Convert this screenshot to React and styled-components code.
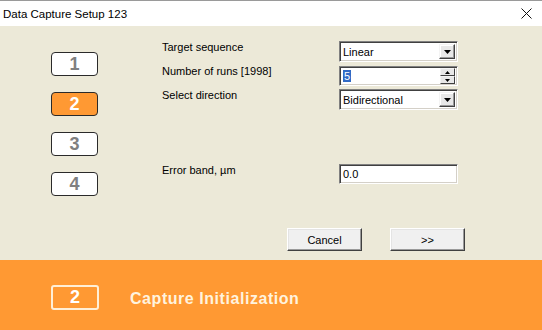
import React from "react";
import styled, { createGlobalStyle } from "styled-components";

const Global = createGlobalStyle`
  html, body { margin: 0; padding: 0; background: #ECE9D8; }
  * { box-sizing: border-box; }
`;

const Window = styled.div`
  width: 542px;
  height: 330px;
  display: flex;
  flex-direction: column;
  font-family: "Liberation Sans", Arial, sans-serif;
  background: #ECE9D8;
  overflow: hidden;
`;

const TitleBar = styled.div`
  height: 26px;
  flex: none;
  background: #fff;
  border-top: 1px solid #9a9a9a;
  display: flex;
  align-items: center;
  justify-content: space-between;
  padding: 0 10px 0 3px;
  font-size: 11.5px;
  color: #000;
`;

const Body = styled.div`
  height: 234px;
  flex: none;
  display: flex;
  flex-direction: column;
`;

const Content = styled.div`
  display: flex;
`;

const StepList = styled.div`
  width: 162px;
  padding: 26px 0 0 51px;
  display: flex;
  flex-direction: column;
  gap: 16px;
`;

const StepBox = styled.div`
  width: 47px;
  height: 24px;
  border: 1px solid #2a2a2a;
  border-radius: 4px;
  background: ${(p) => (p.$active ? "#FF9933" : "#ffffff")};
  color: ${(p) => (p.$active ? "#ffffff" : "#808080")};
  font-weight: bold;
  font-size: 18px;
  line-height: 22px;
  text-align: center;
`;

const Form = styled.div`
  display: flex;
  flex-direction: column;
  padding-top: 15px;
`;

const Row = styled.div`
  display: flex;
  align-items: flex-start;
  margin-top: ${(p) => p.$gap || 0}px;
`;

const Label = styled.div`
  width: 177px;
  font-size: 11px;
  line-height: 13px;
  color: #000;
  margin-top: ${(p) => p.$offset || 0}px;
`;

const Field = styled.div`
  width: 119px;
  height: ${(p) => p.$h || 21}px;
  background: #fff;
  border-top: 1px solid #808080;
  border-left: 1px solid #808080;
  border-right: 1px solid #ffffff;
  border-bottom: 1px solid #ffffff;
  box-shadow: inset 1px 1px 0 #404040, inset -1px -1px 0 #D4D0C8;
  display: flex;
  align-items: center;
  padding: 2px 2px 2px 3px;
  font-size: 11px;
  color: #000;
`;

const FieldText = styled.div`
  flex: 1;
  white-space: nowrap;
`;

const Selected = styled.span`
  background: #316AC5;
  color: #fff;
  padding: 0 1px;
`;

const ArrowButton = styled.div`
  width: 16px;
  height: 15px;
  background: #E8E8E8;
  border-top: 1px solid #f4f4f4;
  border-left: 1px solid #f4f4f4;
  border-right: 1px solid #404040;
  border-bottom: 1px solid #404040;
  box-shadow: inset -1px -1px 0 #9a9a9a, inset 1px 1px 0 #ffffff;
  display: flex;
  align-items: center;
  justify-content: center;
`;

const SpinStack = styled.div`
  display: flex;
  flex-direction: column;
  width: 15px;
  height: 16px;
`;

const SpinButton = styled.div`
  flex: 1;
  background: #E8E8E8;
  border-top: 1px solid #f4f4f4;
  border-left: 1px solid #f4f4f4;
  border-right: 1px solid #404040;
  border-bottom: 1px solid #404040;
  display: flex;
  align-items: center;
  justify-content: center;
`;

const ButtonRow = styled.div`
  margin-top: auto;
  margin-bottom: 9px;
  padding-left: 287px;
  display: flex;
  gap: 28px;
`;

const Button = styled.div`
  width: 75px;
  height: 23px;
  background: #F0F0F0;
  border-top: 1px solid #ffffff;
  border-left: 1px solid #ffffff;
  border-right: 1px solid #404040;
  border-bottom: 1px solid #404040;
  box-shadow: inset -1px -1px 0 #9a9a9a, inset 1px 1px 0 #e4e4e4;
  display: flex;
  align-items: center;
  justify-content: center;
  font-size: 11px;
  color: #000;
`;

const Footer = styled.div`
  flex: 1;
  background: #FF9933;
  display: flex;
  align-items: center;
  padding: 4px 0 0 51px;
  gap: 31px;
`;

const FooterBox = styled.div`
  width: 48px;
  height: 25px;
  border: 2px solid #FFEFD6;
  border-radius: 3px;
  color: #fff;
  font-weight: bold;
  font-size: 18px;
  line-height: 21px;
  text-align: center;
`;

const FooterTitle = styled.div`
  color: #FFF3DE;
  font-weight: bold;
  font-size: 16px;
  letter-spacing: 0.55px;
  padding-top: 3px;
`;

const Tri = ({ up, small }) => {
  const w = small ? 5 : 7;
  const h = small ? 3 : 4;
  return (
    <svg width={w} height={h} viewBox={`0 0 ${w} ${h}`}>
      <polygon
        points={up ? `0,${h} ${w},${h} ${w / 2},0` : `0,0 ${w},0 ${w / 2},${h}`}
        fill="#000"
      />
    </svg>
  );
};

const Combo = ({ value }) => (
  <Field>
    <FieldText>{value}</FieldText>
    <ArrowButton>
      <Tri />
    </ArrowButton>
  </Field>
);

export default function App() {
  return (
    <Window>
      <Global />
      <TitleBar>
        <span>Data Capture Setup 123</span>
        <svg width="11" height="11" viewBox="0 0 11 11">
          <path d="M0.5 0.5 L10.5 10.5 M10.5 0.5 L0.5 10.5" stroke="#111" strokeWidth="1" />
        </svg>
      </TitleBar>
      <Body>
        <Content>
          <StepList>
            <StepBox>1</StepBox>
            <StepBox $active>2</StepBox>
            <StepBox>3</StepBox>
            <StepBox>4</StepBox>
          </StepList>
          <Form>
            <Row>
              <Label>Target sequence</Label>
              <Combo value="Linear" />
            </Row>
            <Row $gap={4}>
              <Label $offset={-1}>Number of runs [1998]</Label>
              <Field $h={20}>
                <FieldText>
                  <Selected>5</Selected>
                </FieldText>
                <SpinStack>
                  <SpinButton>
                    <Tri up small />
                  </SpinButton>
                  <SpinButton>
                    <Tri small />
                  </SpinButton>
                </SpinStack>
              </Field>
            </Row>
            <Row $gap={3}>
              <Label>Select direction</Label>
              <Combo value="Bidirectional" />
            </Row>
            <Row $gap={54}>
              <Label>Error band, µm</Label>
              <Field $h={20}>
                <FieldText>0.0</FieldText>
              </Field>
            </Row>
          </Form>
        </Content>
        <ButtonRow>
          <Button>Cancel</Button>
          <Button>&gt;&gt;</Button>
        </ButtonRow>
      </Body>
      <Footer>
        <FooterBox>2</FooterBox>
        <FooterTitle>Capture Initialization</FooterTitle>
      </Footer>
    </Window>
  );
}
